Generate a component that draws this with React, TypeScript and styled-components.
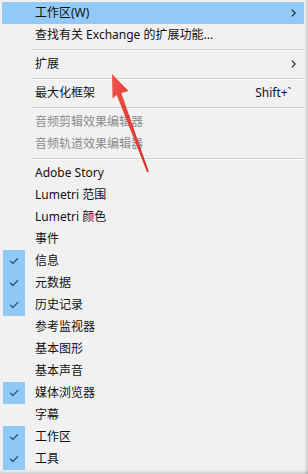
import React from "react";
import styled, { createGlobalStyle } from "styled-components";

const GlobalStyle = createGlobalStyle`
  html, body { margin: 0; padding: 0; background: #f1f1f1; }
  body { font-family: "Noto Sans", "Noto Sans CJK SC", sans-serif; }
`;

const Menu = styled.div`
  position: relative;
  width: 308px;
  height: 474px;
  box-sizing: border-box;
  padding: 2px 4px 4px 2px;
  background: #f1f1f1;
  display: flex;
  flex-direction: column;
  overflow: hidden;
  box-shadow: inset -4px 0 3px -2px rgba(0, 0, 0, 0.16),
    inset 0 -4px 3px -2px rgba(0, 0, 0, 0.16);
`;

const Item = styled.div<{ $active?: boolean; $disabled?: boolean }>`
  display: grid;
  grid-template-columns: 22px 1fr auto;
  align-items: center;
  column-gap: 10px;
  height: 22px;
  padding: 0 8px 0 1px;
  background: ${(p) => (p.$active ? "#91c9f7" : "transparent")};
  color: ${(p) => (p.$disabled ? "#8c8c8c" : "#111")};
  font-size: 12px;
  line-height: 22px;
  white-space: nowrap;
`;

const Check = styled.span<{ $on?: boolean }>`
  height: 22px;
  display: flex;
  align-items: center;
  justify-content: center;
  background: ${(p) => (p.$on ? "#90c8f6" : "transparent")};
`;

const Label = styled.span`
  overflow: hidden;
`;

const Shortcut = styled.span`
  padding-right: 5px;
  color: #111;
`;

const Separator = styled.div`
  height: 7px;
  display: flex;
  align-items: center;
  padding-left: 30px;
  &::before {
    content: "";
    flex: 1;
    height: 1px;
    background: #d2d2d2;
    border-bottom: 1px solid #fbfbfb;
  }
`;

const Overlay = styled.svg`
  position: absolute;
  left: 0;
  top: 0;
  pointer-events: none;
`;

const CheckMark = () => (
  <svg width="10" height="8" viewBox="0 0 10 8">
    <polyline points="1,3.8 3.8,6.5 9,1.2" fill="none" stroke="#2f5b86" strokeWidth="1.4" />
  </svg>
);

const Chevron = () => (
  <svg width="5" height="8" viewBox="0 0 5 8">
    <polyline points="0.8,0.6 4.2,4 0.8,7.4" fill="none" stroke="#1e1e1e" strokeWidth="1.1" />
  </svg>
);

type Entry =
  | { sep: true }
  | {
      sep?: false;
      label: string;
      checked?: boolean;
      active?: boolean;
      disabled?: boolean;
      sub?: boolean;
      shortcut?: string;
    };

const entries: Entry[] = [
  { label: "工作区(W)", active: true, sub: true },
  { label: "查找有关 Exchange 的扩展功能..." },
  { sep: true },
  { label: "扩展", sub: true },
  { sep: true },
  { label: "最大化框架", shortcut: "Shift+`" },
  { sep: true },
  { label: "音频剪辑效果编辑器", disabled: true },
  { label: "音频轨道效果编辑器", disabled: true },
  { sep: true },
  { label: "Adobe Story" },
  { label: "Lumetri 范围" },
  { label: "Lumetri 颜色" },
  { label: "事件" },
  { label: "信息", checked: true },
  { label: "元数据", checked: true },
  { label: "历史记录", checked: true },
  { label: "参考监视器" },
  { label: "基本图形" },
  { label: "基本声音" },
  { label: "媒体浏览器", checked: true },
  { label: "字幕" },
  { label: "工作区", checked: true },
  { label: "工具", checked: true },
];

export default function App() {
  return (
    <>
      <GlobalStyle />
      <Menu>
        {entries.map((e, i) =>
          e.sep ? (
            <Separator key={i} />
          ) : (
            <Item key={i} $active={e.active} $disabled={e.disabled}>
              <Check $on={e.checked}>{e.checked ? <CheckMark /> : null}</Check>
              <Label>{e.label}</Label>
              {e.sub ? <Chevron /> : e.shortcut ? <Shortcut>{e.shortcut}</Shortcut> : <span />}
            </Item>
          )
        )}
        <Overlay width="308" height="474" viewBox="0 0 308 474">
          <defs>
            <linearGradient id="ar" x1="0" y1="0" x2="1" y2="0">
              <stop offset="0" stopColor="#ef5248" />
              <stop offset="1" stopColor="#d42f2a" />
            </linearGradient>
          </defs>
          <polygon
            points="112,74 128.5,91 121.3,93.1 148.9,171.7 147.1,172.3 116.7,94.9 112.5,98.5"
            fill="url(#ar)"
          />
        </Overlay>
      </Menu>
    </>
  );
}
